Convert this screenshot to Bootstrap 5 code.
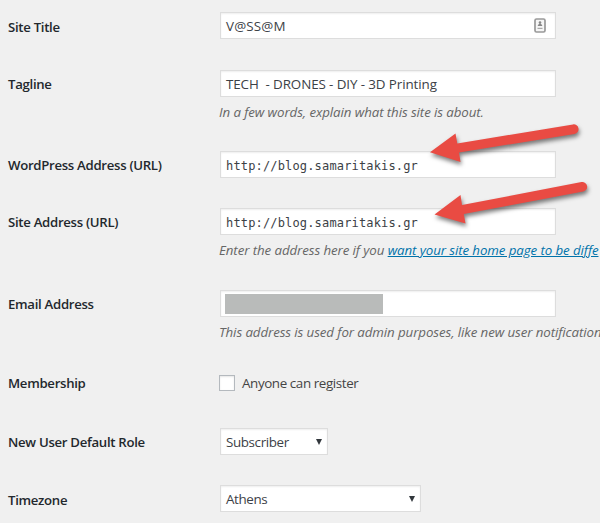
<!DOCTYPE html>
<html lang="en">
<head>
<meta charset="utf-8">
<meta name="viewport" content="width=device-width, initial-scale=1">
<title>General Settings</title>
<link href="https://cdn.jsdelivr.net/npm/bootstrap@5.3.0/dist/css/bootstrap.min.css" rel="stylesheet">
<style>
body{background:#f0f0f0;color:#444;font-family:"Open Sans","Noto Sans",sans-serif;font-size:13.4px;line-height:18px;width:600px;height:523px}
.settings{padding:12px 0 0 8px}
.setting{height:57px}
.h-58{height:58px}.h-81{height:81px}.h-82{height:82px}
.setting-label{width:212px;padding-top:5px;font-size:13.2px;font-weight:600;color:#23282d;letter-spacing:-.3px}
.label-first{padding-top:6px}.label-check{padding-top:3px}
.field{width:336px;height:27px;background:#fff;border:1px solid #ddd;box-shadow:inset 0 1px 2px rgba(0,0,0,.07);padding:0 5px;color:#3c4146;letter-spacing:-.1px;white-space:pre}
.field-mono{font-family:"DejaVu Sans Mono","Liberation Mono",monospace;font-size:12px;letter-spacing:.16px;padding-top:2px}
.field-short{width:108px;letter-spacing:-.38px}.field-zone{width:201px;letter-spacing:-.38px}
.title-text{letter-spacing:.15px}
.hint{margin:6px 0 0 -1px;font-style:italic;color:#666;font-size:13.3px;letter-spacing:-.09px}
.hint a{color:#0073aa}
.redacted{width:158px;height:20px;background:#b9bbba;margin-left:-1px}
.tick{width:16px;height:16px;border:1px solid #b4b9be;background:#fff;box-shadow:inset 0 1px 2px rgba(0,0,0,.1);margin:4px 7px 0 -1px}
.register{padding-top:3px;letter-spacing:-.4px}
.arrows{left:0;top:0;filter:drop-shadow(1px 3px 2px rgba(0,0,0,.5))}
</style>
</head>
<body class="overflow-hidden position-relative">
<form class="settings text-nowrap">
  <div class="setting h-58 d-flex"><div class="setting-label label-first flex-shrink-0"><span>Site Title</span></div>
    <div><div class="field d-flex align-items-center justify-content-between"><span class="title-text">V@SS@M</span>
      <svg class="me-1" width="12" height="15" viewBox="0 0 12 15"><rect x="1" y="1" width="10" height="13" rx="1.5" fill="#f6f6f6" stroke="#999" stroke-width="1.7"/><circle cx="6" cy="4.6" r="1.3" fill="#888"/><path d="M3.6 8Q3.8 6 6 5.5Q8.2 6 8.4 8Z" fill="#888"/><path d="M3.5 10.4H8.5" stroke="#aaa" stroke-width="1.2"/></svg></div></div></div>
  <div class="setting h-81 d-flex"><div class="setting-label flex-shrink-0"><span>Tagline</span></div>
    <div><div class="field d-flex align-items-center"><span>TECH  - DRONES - DIY - 3D Printing</span></div>
      <p class="hint">In a few words, explain what this site is about.</p></div></div>
  <div class="setting d-flex"><div class="setting-label flex-shrink-0"><span>WordPress Address (URL)</span></div>
    <div><div class="field field-mono d-flex align-items-center"><span>http://blog.samaritakis.gr</span></div></div></div>
  <div class="setting h-82 d-flex"><div class="setting-label flex-shrink-0"><span>Site Address (URL)</span></div>
    <div><div class="field field-mono d-flex align-items-center"><span>http://blog.samaritakis.gr</span></div>
      <p class="hint">Enter the address here if you <a href="#">want your site home page to be diffe</a></p></div></div>
  <div class="setting h-81 d-flex"><div class="setting-label flex-shrink-0"><span>Email Address</span></div>
    <div><div class="field d-flex align-items-center"><div class="redacted"></div></div>
      <p class="hint">This address is used for admin purposes, like new user notification.</p></div></div>
  <div class="setting d-flex"><div class="setting-label label-check flex-shrink-0"><span>Membership</span></div>
    <div class="d-flex"><div class="tick"></div><span class="register">Anyone can register</span></div></div>
  <div class="setting d-flex"><div class="setting-label flex-shrink-0"><span>New User Default Role</span></div>
    <div><div class="field field-short d-flex align-items-center justify-content-between"><span>Subscriber</span>
      <svg width="6" height="6" viewBox="0 0 6 6"><path d="M0 0H6L3 6Z" fill="#32373c"/></svg></div></div></div>
  <div class="setting d-flex"><div class="setting-label label-first flex-shrink-0"><span>Timezone</span></div>
    <div><div class="field field-zone d-flex align-items-center justify-content-between"><span>Athens</span>
      <svg width="6" height="6" viewBox="0 0 6 6"><path d="M0 0H6L3 6Z" fill="#32373c"/></svg></div></div></div>
</form>
<svg class="arrows position-absolute pe-none" width="600" height="523" viewBox="0 0 600 523" fill="#e94b43">
  <path d="M430 152.300L455.500 133.500L457.300 143.500L573 124.400A4.800 4.800 0 0 1 574.500 133.900L459 152.500L460.500 162Z"/>
  <path d="M434.500 214.500L460.500 195L462 205L581.500 182.100A4.800 4.800 0 0 1 583.200 191.600L463.800 214L465.500 223.500Z"/>
</svg>
<script src="https://cdn.jsdelivr.net/npm/bootstrap@5.3.0/dist/js/bootstrap.bundle.min.js"></script>
</body>
</html>
